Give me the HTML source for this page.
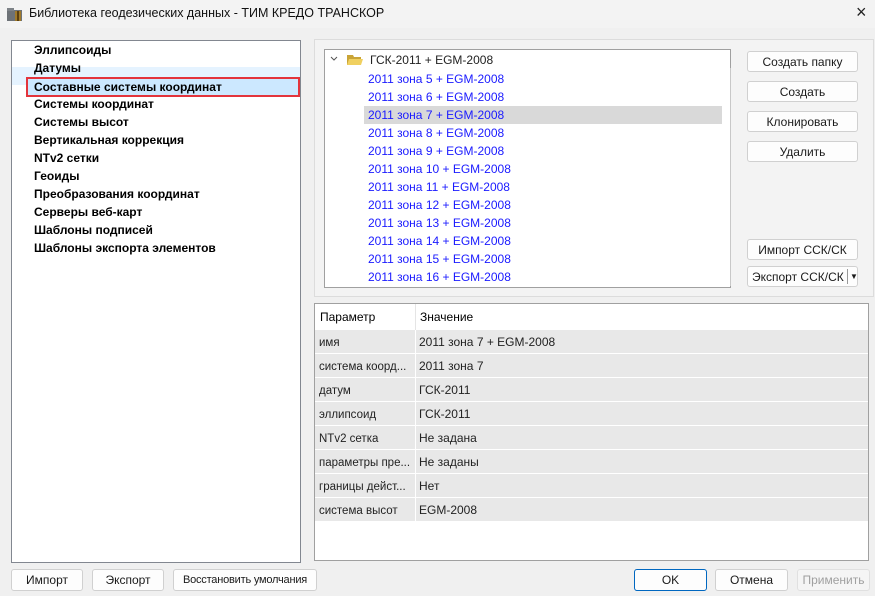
<!DOCTYPE html>
<html><head><meta charset="utf-8"><style>
*{box-sizing:border-box;margin:0;padding:0}
body{width:875px;height:596px;background:#f0f0f0;font-family:"Liberation Sans","Noto Sans CJK SC",sans-serif;font-size:12px;color:#000;position:relative;overflow:hidden}
.a{position:absolute}
.title{left:0;top:0;width:875px;height:28px;background:#f3f3f3}
.btn{position:absolute;background:#fdfdfd;border:1px solid #d0d0d0;border-radius:3px;height:21px;text-align:center;line-height:20px;font-size:12px;color:#1a1a1a}
.left{left:11px;top:40px;width:290px;height:523px;background:#fff;border:1px solid #828790}
.li{position:absolute;left:22px;font-weight:bold;font-size:12px;height:18px;line-height:18px}
.tree{left:324px;top:49px;width:407px;height:239px;background:#fff;border:1px solid #a0a0a0}
.ti{position:absolute;left:43px;color:#1a1aff;height:18px;line-height:18px}
.tbl{left:314px;top:303px;width:555px;height:258px;background:#fff;border:1px solid #a0a0a0}
.row{position:absolute;left:0;width:553px;height:24px;line-height:24px;background:#e8e8e8;border-bottom:1px solid #fff}
.row span{position:absolute;left:4px;top:1px;font-size:11.5px;color:#222}
.row b{position:absolute;left:104px;font-weight:normal;color:#222}
.row i{position:absolute;left:100px;top:0;width:1px;height:24px;background:#fff}
</style></head><body>
<div class="a title"></div>
<svg class="a" style="left:7px;top:7px" width="16" height="15"><rect x="0" y="3" width="15" height="11" fill="#6d7277"/><rect x="0" y="1" width="7" height="3" fill="#7d8287"/><rect x="8" y="4" width="6" height="10" fill="#a07a2a"/><rect x="10" y="4" width="2" height="10" fill="#5a3f10"/></svg>
<div class="a" style="left:29px;top:6px;font-size:12.5px;color:#111">Библиотека геодезических данных - ТИМ КРЕДО ТРАНСКОР</div>
<div class="a" style="left:856px;top:2px;font-size:18px;color:#222">×</div>

<div class="a left">
<div class="a" style="left:0;top:26px;width:288px;height:18px;background:#e5f3ff"></div>
<div class="a" style="left:14px;top:36px;width:274px;height:20px;background:#cce8ff;border:2px solid #e3343c"></div>
<div class="li" style="top:0">Эллипсоиды</div>
<div class="li" style="top:18px">Датумы</div>
<div class="li" style="top:37px">Составные системы координат</div>
<div class="li" style="top:54px">Системы координат</div>
<div class="li" style="top:72px">Системы высот</div>
<div class="li" style="top:90px">Вертикальная коррекция</div>
<div class="li" style="top:108px">NTv2 сетки</div>
<div class="li" style="top:126px">Геоиды</div>
<div class="li" style="top:144px">Преобразования координат</div>
<div class="li" style="top:162px">Серверы веб-карт</div>
<div class="li" style="top:180px">Шаблоны подписей</div>
<div class="li" style="top:198px">Шаблоны экспорта элементов</div>
</div>

<div class="a" style="left:314px;top:39px;width:560px;height:258px;background:#f3f3f3;border:1px solid #dcdcdc"></div>
<div class="a tree">
<div class="a" style="left:39px;top:56px;width:358px;height:18px;background:#d9d9d9"></div>
<div class="a" style="left:405px;top:18px;width:1px;height:218px;background:#c8c8c8"></div>
<svg class="a" style="left:5px;top:6px" width="8" height="6"><path d="M1 1l3 3l3-3" stroke="#555" fill="none"/></svg>
<svg class="a" style="left:22px;top:4px" width="16" height="12"><path d="M0 1h6l1 2h7v8H0z" fill="#c9a437"/><path d="M2 5h14l-2 6H0z" fill="#f0d060"/></svg>
<div class="a" style="left:45px;top:1px;height:18px;line-height:18px;color:#222">ГСК-2011 + EGM-2008</div>
<div class="ti" style="top:20px">2011 зона 5 + EGM-2008</div>
<div class="ti" style="top:38px">2011 зона 6 + EGM-2008</div>
<div class="ti" style="top:56px">2011 зона 7 + EGM-2008</div>
<div class="ti" style="top:74px">2011 зона 8 + EGM-2008</div>
<div class="ti" style="top:92px">2011 зона 9 + EGM-2008</div>
<div class="ti" style="top:110px">2011 зона 10 + EGM-2008</div>
<div class="ti" style="top:128px">2011 зона 11 + EGM-2008</div>
<div class="ti" style="top:146px">2011 зона 12 + EGM-2008</div>
<div class="ti" style="top:164px">2011 зона 13 + EGM-2008</div>
<div class="ti" style="top:182px">2011 зона 14 + EGM-2008</div>
<div class="ti" style="top:200px">2011 зона 15 + EGM-2008</div>
<div class="ti" style="top:218px">2011 зона 16 + EGM-2008</div>
</div>
<div class="btn" style="left:747px;top:51px;width:111px">Создать папку</div>
<div class="btn" style="left:747px;top:81px;width:111px">Создать</div>
<div class="btn" style="left:747px;top:111px;width:111px">Клонировать</div>
<div class="btn" style="left:747px;top:141px;width:111px">Удалить</div>
<div class="btn" style="left:747px;top:239px;width:111px">Импорт ССК/СК</div>
<div class="btn" style="left:747px;top:266px;width:111px;text-align:left;padding-left:4px">Экспорт ССК/СК<span style="position:absolute;left:99px;top:2px;width:1px;height:15px;background:#999"></span><span style="position:absolute;left:102px;top:0;font-size:8px">▼</span></div>

<div class="a tbl">
<div class="a" style="left:0;top:0;width:553px;height:26px;line-height:26px;background:#fff"><span class="a" style="left:5px">Параметр</span><span class="a" style="left:100px;top:0;width:1px;height:26px;background:#e5e5e5"></span><span class="a" style="left:105px">Значение</span></div>
<div class="row" style="top:26px"><span>имя</span><i></i><b>2011 зона 7 + EGM-2008</b></div>
<div class="row" style="top:50px"><span>система коорд...</span><i></i><b>2011 зона 7</b></div>
<div class="row" style="top:74px"><span>датум</span><i></i><b>ГСК-2011</b></div>
<div class="row" style="top:98px"><span>эллипсоид</span><i></i><b>ГСК-2011</b></div>
<div class="row" style="top:122px"><span>NTv2 сетка</span><i></i><b>Не задана</b></div>
<div class="row" style="top:146px"><span>параметры пре...</span><i></i><b>Не заданы</b></div>
<div class="row" style="top:170px"><span>границы дейст...</span><i></i><b>Нет</b></div>
<div class="row" style="top:194px"><span>система высот</span><i></i><b>EGM-2008</b></div>
</div>

<div class="btn" style="left:11px;top:569px;width:72px;height:22px">Импорт</div>
<div class="btn" style="left:92px;top:569px;width:72px;height:22px">Экспорт</div>
<div class="btn" style="left:173px;top:569px;width:144px;height:22px;font-size:11px;letter-spacing:-0.2px">Восстановить умолчания</div>
<div class="btn" style="left:634px;top:569px;width:73px;height:22px;border:1px solid #0067c0">OK</div>
<div class="btn" style="left:715px;top:569px;width:73px;height:22px">Отмена</div>
<div class="btn" style="left:797px;top:569px;width:73px;height:22px;color:#a0a0a0;background:#f5f5f5;border-color:#e0e0e0">Применить</div>
</body></html>
